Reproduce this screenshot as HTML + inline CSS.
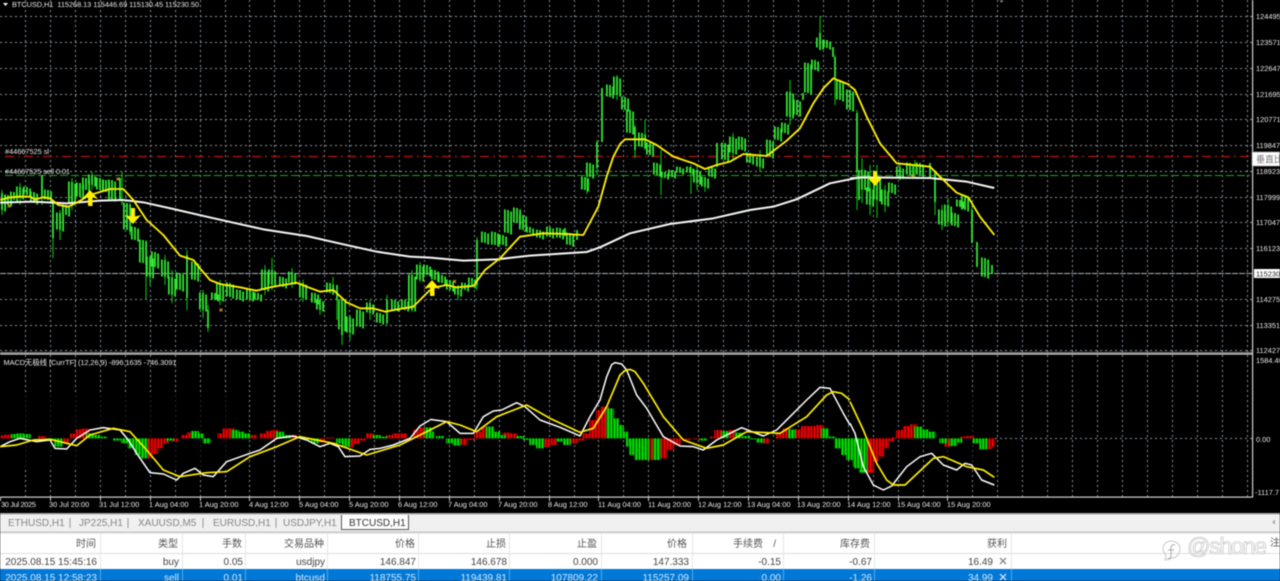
<!DOCTYPE html>
<html><head><meta charset="utf-8"><title>BTCUSD,H1</title>
<style>
html,body{margin:0;padding:0;background:#000;width:1280px;height:581px;overflow:hidden}
svg{display:block;filter:blur(.42px)}
text{font-family:"Liberation Sans","Noto Sans CJK SC",sans-serif}
.ax text,.ax{font-size:7.4px;fill:#e8e8e8}
.th text{font-size:10px;fill:#555;text-anchor:end}
.r1 text{font-size:10px;fill:#444;text-anchor:end}
.r2 text{font-size:10px;fill:#d5e8f8;text-anchor:end}
.tab{font-size:10px;fill:#858585}
</style></head><body>
<svg width="1280" height="581" viewBox="0 0 1280 581" xmlns="http://www.w3.org/2000/svg">
<defs><pattern id="st" patternUnits="userSpaceOnUse" width="3.125" height="10"><rect x="0" y="0" width=".7" height="10" fill="#000"/></pattern></defs>
<rect width="1280" height="581" fill="#000"/>

<!-- grid -->
<path fill="none" stroke="#8390 9c" stroke-dasharray="2 3" style="stroke:#83909c" d="M25.5 0V497M50.5 0V497M75.5 0V497M100.5 0V497M125.5 0V497M150.5 0V497M175.5 0V497M200.5 0V497M225.5 0V497M249.5 0V497M274.5 0V497M299.5 0V497M324.5 0V497M349.5 0V497M374.5 0V497M399.5 0V497M424.5 0V497M449.5 0V497M474.5 0V497M499.5 0V497M524.5 0V497M549.5 0V497M574.5 0V497M598.5 0V497M623.5 0V497M648.5 0V497M673.5 0V497M698.5 0V497M723.5 0V497M748.5 0V497M773.5 0V497M798.5 0V497M823.5 0V497M848.5 0V497M873.5 0V497M898.5 0V497M923.5 0V497M947.5 0V497M972.5 0V497M997.5 0V497M1022.5 0V497M1047.5 0V497M1072.5 0V497M1097.5 0V497M1122.5 0V497M1147.5 0V497M1172.5 0V497M1197.5 0V497M1222.5 0V497M1247.5 0V497"/>
<path fill="none" stroke="#83909c" stroke-dasharray="2 3" d="M0 16.5H1252M0 42.5H1252M0 68.5H1252M0 94.5H1252M0 119.5H1252M0 145.5H1252M0 171.5H1252M0 197.5H1252M0 222.5H1252M0 248.5H1252M0 299.5H1252M0 325.5H1252M0 350.5H1252"/>
<path fill="none" stroke="#aab2ba" stroke-dasharray="6 1" d="M0 273.5H1252"/>
<path fill="none" stroke="#c01010" stroke-width="1.2" stroke-dasharray="9 4 2 4" d="M5 156.5H1250"/>
<path fill="none" stroke="#20a820" stroke-dasharray="8 3" d="M5 175.5H1250"/>

<!-- candles -->
<g fill="none">
<path stroke="#00d000" stroke-width="1" d="M2 190V215M20 183V205M42 175V205M53 200V258M60 210V240M72 178V210M92 172V190M122 172V205M130 203V235M146 240V300M150 255V285M165 255V285M172 270V303M187 250V310M203 290V318M208 305V332M220 280V305M272 258V290M265 265V295M292 268V288M303 280V302M320 298V315M333 277V295M337 285V320M342 298V345M350 315V340M370 300V320M387 295V325M412 270V312M420 262V282M458 285V300M477 237V290M587 170V194M597 140V175M617 75V100M635 125V158M645 120V150M661 150V195M691 165V194M697 165V190M705 177V192M733 133V160M760 150V172M790 80V125M820 16V50M835 55V105M857 110V210M862 158V203M870 165V215M877 165V218M885 185V212M900 163V180M915 160V178M935 170V215M942 205V230M948 198V226M972 205V243"/>
<path stroke="#33f033" stroke-width="1.7" d="M2 193V210M8 195V205M14 192V200M20 187V198M27 187V195M34 192V203M42 175V197M48 190V200M53 200V238M60 213V230M66 205V215M72 182V203M80 183V197M86 178V190M92 175V185M100 178V190M106 180V192M112 180V200M120 178V200M127 203V230M135 227V240M143 240V263M150 257V277M155 252V267M165 260V277M172 277V295M180 273V290M187 255V298M195 262V280M203 293V310M208 310V328M215 293V300M220 283V300M230 283V297M240 290V300M250 290V300M258 293V300M265 270V290M272 270V285M283 277V287M292 272V283M303 283V298M315 293V303M320 300V310M330 283V293M337 285V300M342 300V335M350 317V333M360 310V327M370 303V313M380 313V323M387 300V323M395 300V310M405 300V310M412 275V310M420 265V280M427 265V275M435 270V280M442 275V283M450 280V290M458 288V295M465 283V290M472 278V287M477 240V285M485 232V243M495 232V245M503 235V245M508 210V233M517 208V223M523 215V230M530 227V233M540 230V238M550 227V237M560 228V238M565 228V236M570 233V245M577 230V240M585 177V190M590 163V177M597 142V168M602 88V142M610 85V97M617 77V95M625 97V110M630 110V133M635 127V150M642 133V147M650 143V155M657 163V175M665 172V178M672 170V177M680 167V173M690 167V173M697 170V183M705 177V187M712 167V177M717 143V167M725 143V160M733 137V153M742 137V150M750 153V163M760 157V167M770 140V157M778 127V140M785 123V133M790 92V117M797 100V115M803 93V100M808 63V93M815 60V70M820 33V50M827 40V48M833 47V57M835 57V78M840 80V100M850 90V110M857 113V172M859 170V200M865 170V190M870 188V205M877 175V200M885 190V205M892 183V193M900 167V177M910 163V175M920 163V175M930 163V177M935 173V202M942 210V225M948 205V222M955 213V226M960 200V207M965 195V210M972 210V243M977 242V267M985 258V277M992 265V274"/>
<path id="cs" transform="translate(3.1,1.5)" stroke="#33f033" stroke-width="1.7" d="M2 193V210M8 195V205M14 192V200M20 187V198M27 187V195M34 192V203M48 190V200M60 213V230M66 205V215M72 182V203M80 183V197M86 178V190M92 175V185M100 178V190M106 180V192M112 180V200M127 203V230M135 227V240M143 240V263M150 257V277M155 252V267M165 260V277M172 277V295M180 273V290M195 262V280M203 293V310M215 293V300M220 283V300M230 283V297M240 290V300M250 290V300M258 293V300M265 270V290M272 270V285M283 277V287M292 272V283M303 283V298M315 293V303M320 300V310M330 283V293M342 300V330M350 317V333M360 310V327M370 303V313M380 313V323M395 300V310M405 300V310M412 275V310M420 265V280M427 265V275M435 270V280M442 275V283M450 280V290M458 288V295M465 283V290M472 278V287M485 232V243M495 232V245M503 235V245M508 210V233M517 208V223M523 215V230M530 227V233M540 230V238M550 227V237M560 228V238M570 233V245M585 177V190M590 163V177M610 85V97M617 77V95M625 97V110M630 110V133M642 133V147M650 143V155M657 163V175M665 172V178M672 170V177M680 167V173M690 167V173M697 170V183M705 177V187M712 167V177M725 143V160M733 137V153M742 137V150M750 153V163M760 157V167M770 140V157M778 127V140M785 123V133M790 92V117M797 100V115M808 63V93M815 60V70M820 38V48M827 40V48M840 80V100M850 90V110M865 170V190M870 188V205M877 175V200M885 190V205M892 183V193M900 167V177M910 163V175M920 163V175M942 210V225M948 205V222M955 213V226M960 200V207M965 195V210M985 258V277"/>
<use href="#cs" transform="translate(-6.2,-2)"/>

<!-- MAs (zoom coords) -->
<g stroke-linejoin="round">
<polyline transform="scale(.33333)" stroke="#f6f6f6" stroke-width="6" points="0,608 100,605 200,610 300,602 370,600 430,607 520,627 620,650 700,668 790,688 920,708 1030,733 1130,755 1230,770 1290,773"/>
<polyline transform="translate(430,0) scale(.33333)" stroke="#f6f6f6" stroke-width="6" points="0,773 100,782 200,778 300,767 470,756 510,742 600,700 720,672 850,655 960,630 1030,620 1100,598 1200,550 1290,532"/>
<polyline transform="translate(850,0) scale(.33333)" stroke="#f6f6f6" stroke-width="6" points="0,535 40,532 240,534 350,545 433,564"/>
<polyline transform="scale(.33333)" stroke="#fff000" stroke-width="5.5" points="0,600 30,592 60,590 90,590 105,598 130,592 150,595 175,615 205,620 230,608 270,585 330,567 370,567 400,600 440,660 490,705 540,767 580,780 600,805 630,840 660,852 720,862 770,872 810,862 850,855 890,848 920,860 960,875 1000,870 1040,907 1080,925 1120,925 1155,935 1210,925 1240,920 1290,870"/>
<polyline transform="translate(430,0) scale(.33333)" stroke="#fff000" stroke-width="5.5" points="0,865 50,855 80,862 130,858 165,810 210,775 270,710 340,700 410,702 460,705 505,620 530,530 550,470 570,432 585,418 645,418 680,435 730,470 790,490 825,507 860,495 900,485 940,462 1010,468 1070,422 1110,385 1150,310 1180,265 1210,235 1260,255"/>
<polyline transform="translate(850,0) scale(.33333)" stroke="#fff000" stroke-width="5.5" points="0,258 15,270 50,350 90,430 140,490 240,500 270,530 320,578 355,592 390,650 433,705"/>
</g>
</g>

<!-- arrows -->
<g fill="#fff000">
<path d="M90 190L98 199L92.5 197.5V206H88V197.5L82 199Z"/>
<path d="M432 280L440 289L434.5 287.5V296H430V287.5L424 289Z"/>
<path d="M133 224L141 215L135 216.5V208H131V216.5L125 215Z"/>
<path d="M875 186L883 177L877 178.5V171H873V178.5L867 177Z"/>
</g>
<g stroke="#e0a030" stroke-width=".9" fill="none">
<path d="M7.5 204.5l3 3m0-3l-3 3M116.500 177.500l3 3m0-3l-3 3M219.500 308.500l3 3m0-3l-3 3M453 280l3 3m0-3l-3 3M911 174.500l3 3m0-3l-3 3"/>
</g>

<!-- chart text -->
<g class="ax">
<path d="M3 3H8L5.500 6Z" fill="#fff"/>
<text x="12" y="7" textLength="187">BTCUSD,H1&#160;&#160;115268.13 115446.69 115130.45 115230.50</text>
<text x="5" y="154" textLength="44">#44667525 sl</text>
<text x="5" y="174" textLength="65">#44667525 sell 0.01</text>
<path d="M1000 0l1.500 2 1.500-2" stroke="#999" fill="none"/>
</g>

<!-- separator -->
<rect x="0" y="352" width="1253" height="1.500" fill="#777"/>
<rect x="0" y="353.500" width="1253" height="1.200" fill="#c8c8c8"/>

<!-- MACD hist -->
<g fill="none" stroke-width="24">
<path transform="translate(0,350) scale(.33333)" stroke="#f00000" d="M5 265V256M25 265V254M125 265V258M195 265V280M222 265V250M240 265V238M255 265V236M445 265V325M462 265V312M478 265V295M495 265V280M525 265V275M555 265V255M572 265V247M665 265V250M680 265V235M692 265V235M760 265V255M790 265V250M808 265V243M825 265V240M880 265V255M965 265V277M990 265V262M1050 265V292M1068 265V282M1085 265V272M1110 265V250M1170 265V255M1190 265V250M1210 265V250M1250 265V240M1268 265V232"/>
<path transform="translate(0,350) scale(.33333)" stroke="#00e000" d="M45 265V252M60 265V250M80 265V252M150 265V272M175 265V290M270 265V250M290 265V255M310 265V260M350 265V272M375 265V280M395 265V295M415 265V315M432 265V325M510 265V272M585 265V243M600 265V250M620 265V280M705 265V240M722 265V245M740 265V250M840 265V245M860 265V255M920 265V270M945 265V280M1020 265V280M1038 265V290M1130 265V255M1150 265V260M1285 265V232"/>
<path transform="translate(430,350) scale(.33333)" stroke="#f00000" d="M100 265V285M125 265V270M145 265V245M165 265V230M230 265V248M250 265V250M350 265V292M370 265V285M430 265V280M450 265V272M470 265V250M490 265V210M510 265V180M525 265V170M660 265V330M700 265V325M720 265V300M740 265V285M770 265V270M800 265V268M850 265V260M865 265V240M905 265V240M1005 265V280M1050 265V250M1070 265V235M1105 265V238M1125 265V228M1145 265V228M1170 265V225"/>
<path transform="translate(430,350) scale(.33333)" stroke="#00e000" d="M0 265V245M30 265V258M60 265V280M80 265V287M180 265V230M200 265V245M215 265V255M270 265V258M290 265V270M310 265V285M330 265V295M390 265V275M410 265V285M540 265V175M555 265V205M570 265V225M582 265V245M600 265V290M610 265V315M625 265V330M645 265V330M680 265V330M820 265V272M885 265V243M925 265V248M950 265V258M970 265V268M990 265V278M1085 265V238M1185 265V235M1205 265V260M1225 265V295M1245 265V315M1265 265V330M1285 265V355"/>
<path transform="translate(850,350) scale(.33333)" stroke="#f00000" d="M60 265V368M75 265V335M90 265V320M105 265V295M120 265V275M135 265V262M150 265V240M170 265V228M190 265V223M295 265V290M340 265V260M360 265V258M415 265V298M435 265V290"/>
<path transform="translate(850,350) scale(.33333)" stroke="#00e000" d="M0 265V330M20 265V350M40 265V368M205 265V230M225 265V238M245 265V245M280 265V280M310 265V288M325 265V278M380 265V280M400 265V298"/>
</g>
<rect x="0" y="395" width="1000" height="75" fill="url(#st)"/>
<rect x="995" y="395" width="12" height="75" fill="#000"/>
<path fill="none" stroke="#83909c" stroke-dasharray="2 3" d="M995 438.500H1252"/>
<path fill="none" stroke="#83909c" stroke-dasharray="2 3" d="M997.500 395V497"/>

<!-- MACD lines -->
<g fill="none" stroke-linejoin="round">
<polyline transform="translate(0,350) scale(.33333)" stroke="#fff" stroke-width="4.500" points="0,290 30,275 60,265 110,275 150,270 165,295 200,297 230,265 270,240 310,233 360,240 385,270 410,310 450,368 490,372 530,390 550,370 585,355 610,375 640,380 680,335 750,310 780,300 830,265 880,258 920,270 960,290 990,280 1015,290 1035,320 1080,318 1110,298 1140,295 1180,285 1230,265 1260,228 1290,210"/>
<polyline transform="translate(430,350) scale(.33333)" stroke="#fff" stroke-width="4.500" points="0,208 50,215 90,250 130,250 160,200 190,183 215,180 260,158 285,170 330,210 390,232 450,258 480,200 510,150 530,80 545,44 555,38 575,42 590,60 620,135 650,175 700,260 750,288 790,290 820,300 860,270 900,250 935,233 1000,258 1040,240 1075,205 1130,150 1170,112 1200,115 1240,190 1260,225"/>
<polyline transform="translate(850,350) scale(.33333)" stroke="#fff" stroke-width="4.500" points="0,220 15,250 40,350 70,405 100,420 125,408 170,350 210,320 245,310 280,345 320,360 345,340 365,345 395,390 433,405"/>
<polyline transform="translate(0,350) scale(.33333)" stroke="#fff000" stroke-width="5" points="0,290 50,285 100,270 150,268 230,287 270,255 340,235 390,245 440,300 490,360 540,380 620,368 680,365 750,320 830,290 900,260 1000,280 1100,315 1200,285 1290,240"/>
<polyline transform="translate(430,350) scale(.33333)" stroke="#fff000" stroke-width="5" points="0,240 50,215 90,225 140,245 200,200 290,165 360,205 450,247 490,235 530,170 570,75 585,62 600,58 615,65 640,100 700,200 760,270 830,295 880,285 950,245 1050,250 1130,200 1190,135 1210,125 1235,130 1260,150"/>
<polyline transform="translate(850,350) scale(.33333)" stroke="#fff000" stroke-width="5" points="0,155 40,240 80,340 110,390 130,405 165,405 250,325 280,320 350,350 400,360 433,382"/>
</g>

<!-- axes -->
<rect x="1252" y="0" width="1.200" height="497" fill="#d0d0d0"/>
<rect x="0" y="496.500" width="1253" height="1.200" fill="#d0d0d0"/>
<g class="ax">
<text x="1256" y="19">124495</text><text x="1256" y="45">123571</text><text x="1256" y="71">122647</text><text x="1256" y="97">121695</text><text x="1256" y="122">120771</text><text x="1256" y="148">119847</text><text x="1256" y="174">118923</text><text x="1256" y="200">117999</text><text x="1256" y="225">117047</text><text x="1256" y="251">116123</text><text x="1256" y="302">114275</text><text x="1256" y="328">113351</text><text x="1256" y="353">112427</text>
<text x="1256" y="363">1584.40</text><text x="1256" y="442">0.00</text><text x="1255" y="495">-1117.7</text>
<text x="3.500" y="365" textLength="173">MACD无极线 [CurrTF] (12,26,9) -896.1635 -746.3091</text>
<text x="1" y="507" textLength="35">30 Jul 2025</text><text x="49" y="507">30 Jul 20:00</text><text x="99" y="507">31 Jul 12:00</text><text x="149" y="507">1 Aug 04:00</text><text x="199" y="507">1 Aug 20:00</text><text x="249" y="507">4 Aug 12:00</text><text x="299" y="507">5 Aug 04:00</text><text x="349" y="507">5 Aug 20:00</text><text x="398" y="507">6 Aug 12:00</text><text x="448" y="507">7 Aug 04:00</text><text x="498" y="507">7 Aug 20:00</text><text x="548" y="507">8 Aug 12:00</text><text x="598" y="507">11 Aug 04:00</text><text x="648" y="507">11 Aug 20:00</text><text x="698" y="507">12 Aug 12:00</text><text x="747" y="507">13 Aug 04:00</text><text x="797" y="507">13 Aug 20:00</text><text x="847" y="507">14 Aug 12:00</text><text x="897" y="507">15 Aug 04:00</text><text x="947" y="507">15 Aug 20:00</text>
</g>
<path stroke="#ccc" d="M.5 497V501M50.500 497V501M100.500 497V501M150.500 497V501M200.500 497V501M249.500 497V501M299.500 497V501M349.500 497V501M399.500 497V501M449.500 497V501M499.500 497V501M549.500 497V501M598.500 497V501M648.500 497V501M698.500 497V501M748.500 497V501M798.500 497V501M848.500 497V501M898.500 497V501M947.500 497V501"/>

<!-- price boxes -->
<rect x="1252" y="152" width="28" height="14" fill="#fff" stroke="#999" stroke-width=".8"/>
<text x="1256" y="162.500" font-size="9" fill="#777">垂直比</text>
<rect x="1254" y="269" width="26" height="9" fill="#fff"/>
<text x="1256" y="276.500" font-size="7.400" fill="#222">115230</text>

<!-- bottom panel -->
<rect x="0" y="513" width="1280" height="68" fill="#f0f0f0"/>
<rect x="0" y="513" width="1280" height="1.500" fill="#a8a8a8"/>
<text class="tab" x="8" y="526">ETHUSD,H1</text>
<text class="tab" x="79" y="526">JP225,H1</text>
<text class="tab" x="138" y="526">XAUUSD,M5</text>
<text class="tab" x="213" y="526">EURUSD,H1</text>
<text class="tab" x="283" y="526">USDJPY,H1</text>
<path stroke="#999" d="M70 518V528M128 518V528M203 518V528M276 518V528"/>
<rect x="341" y="515" width="67" height="15" fill="#fff"/>
<path fill="none" stroke="#555" d="M341.500 515V529.500H408.500V515"/>
<text x="349" y="526" font-size="10" fill="#333">BTCUSD,H1</text>
<path fill="#aaa" d="M1275 519.500v5l-3-2.500z"/>
<rect x="0" y="531.500" width="1280" height="1.500" fill="#c8c8c8"/>

<rect x="0" y="534" width="1280" height="20" fill="#fff"/>
<rect x="0" y="553" width="1280" height="1" fill="#ddd"/>
<rect x="0" y="554" width="1280" height="15" fill="#fff"/>
<rect x="0" y="569" width="1280" height="12" fill="#0078d7"/>
<path stroke="#e6e6e6" d="M100.500 534V569M182.500 534V569M245.500 534V569M327.500 534V569M418.500 534V569M509.500 534V569M601.500 534V569M692.500 534V569M783.500 534V569M874.500 534V569M1011.500 534V569"/>
<path stroke="#5aa5e2" d="M100.500 569V581M182.500 569V581M245.500 569V581M327.500 569V581M418.500 569V581M509.500 569V581M601.500 569V581M692.500 569V581M783.500 569V581M874.500 569V581M1011.500 569V581"/>
<g class="th">
<text x="96" y="547">时间</text><text x="178" y="547">类型</text><text x="242" y="547">手数</text><text x="324" y="547">交易品种</text><text x="415" y="547">价格</text><text x="506" y="547">止损</text><text x="597" y="547">止盈</text><text x="687" y="547">价格</text><text x="763" y="547">手续费</text><text x="776" y="547" font-size="7">/</text><text x="870" y="547">库存费</text><text x="1007" y="547">获利</text><text x="1280" y="546">注</text>
</g>
<g class="r1">
<text x="97" y="565">2025.08.15 15:45:16</text><text x="179" y="565">buy</text><text x="243" y="565">0.05</text><text x="325" y="565">usdjpy</text><text x="416" y="565">146.847</text><text x="507" y="565">146.678</text><text x="598" y="565">0.000</text><text x="689" y="565">147.333</text><text x="781" y="565">-0.15</text><text x="872" y="565">-0.67</text><text x="993" y="565">16.49</text>
</g>
<g class="r2">
<text x="97" y="581">2025.08.15 12:58:23</text><text x="179" y="581">sell</text><text x="243" y="581">0.01</text><text x="325" y="581">btcusd</text><text x="416" y="581">118755.75</text><text x="507" y="581">119439.81</text><text x="598" y="581">107809.22</text><text x="689" y="581">115257.09</text><text x="781" y="581">0.00</text><text x="872" y="581">-1.26</text><text x="993" y="581">34.99</text>
</g>
<path stroke="#888" stroke-width="1.300" d="M1000 558l6 6m0-6l-6 6"/>
<path stroke="#cfe0f0" stroke-width="1.300" d="M1000 574l6 6m0-6l-6 6"/>

<!-- watermark -->
<g fill="none" stroke="#b5b5b5" stroke-width="1">
<path d="M1171 541c-5 0-8 4-8 8c0 3 2 5 3 6c0 2 0 3-1 5c3 0 5-1 7-2c4 0 8-4 8-9c0-5-4-8-9-8Z" stroke="#c8c8c8"/>
<path d="M1175 545c-3-1-4 1-4 3v8c0 2-1 3-3 2M1168 550h6" stroke="#aaa"/>
</g>
<text x="1187" y="554" font-size="23" fill="#fff" stroke="#b8b8b8" stroke-width=".6" textLength="80" style="font-family:'Liberation Sans',sans-serif">@shone</text>
</svg>
</body></html>
